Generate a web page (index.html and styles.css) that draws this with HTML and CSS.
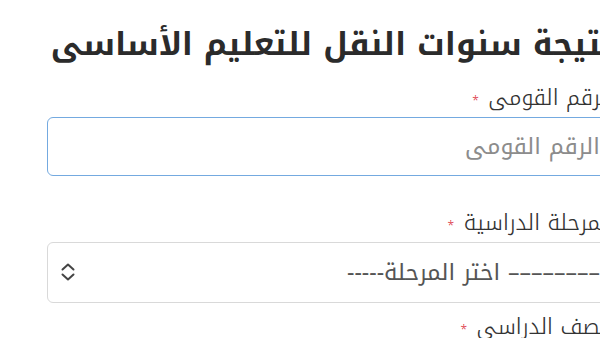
FILE: index.html
```html
<!DOCTYPE html>
<html lang="ar">
<head>
<meta charset="utf-8">
<title>نتيجة سنوات النقل للتعليم الأساسى</title>
<link rel="stylesheet" href="styles.css">
</head>
<body>
<main class="page">
  <form class="form" dir="rtl">
    <h2 class="title">نتيجة سنوات النقل للتعليم الأساسى</h2>

    <div class="field field-first">
      <label class="label" for="nid">الرقم القومى <span class="req">*</span></label>
      <input class="control control-focus" id="nid" type="text" placeholder="الرقم القومى">
    </div>

    <div class="field">
      <label class="label" for="stage">المرحلة الدراسية <span class="req">*</span></label>
      <div class="select-wrap">
        <select class="control control-select" id="stage">
          <option>–––––––– اختر المرحلة-----</option>
        </select>
        <svg class="chevrons" width="16" height="20" viewBox="0 0 16 20" aria-hidden="true">
          <path d="M2.5 7.5 L8 2.5 L13.5 7.5" fill="none" stroke="#444" stroke-width="2" stroke-linecap="round" stroke-linejoin="round"/>
          <path d="M2.5 12.5 L8 17.5 L13.5 12.5" fill="none" stroke="#444" stroke-width="2" stroke-linecap="round" stroke-linejoin="round"/>
        </svg>
      </div>
    </div>

    <div class="field">
      <label class="label" for="grade">الصف الدراسى <span class="req">*</span></label>
      <div class="select-wrap">
        <select class="control control-select" id="grade">
          <option>–––––––– اختر الصف-----</option>
        </select>
      </div>
    </div>
  </form>
</main>
</body>
</html>
```

FILE: styles.css
```css
html, body {
  margin: 0;
  padding: 0;
  background: #ffffff;
  overflow: hidden;
}

body {
  font-family: "Noto Kufi Arabic", "Noto Sans Arabic", "DejaVu Sans", sans-serif;
  color: #333333;
}

.page {
  width: 700px;
  padding-left: 47px;
}

.form {
  width: 566px;
  display: flex;
  flex-direction: column;
}

.title {
  margin: 25px 0 20px 0;
  font-size: 32px;
  line-height: 40px;
  font-weight: 700;
  color: #2b2b2b;
  text-align: right;
  white-space: nowrap;
}

.field {
  display: flex;
  flex-direction: column;
  margin-bottom: 11px;
}

.field-first {
  margin-bottom: 34px;
}

.label {
  font-size: 22px;
  line-height: 26px;
  font-weight: 300;
  color: #333333;
  margin-bottom: 6px;
  white-space: nowrap;
}

.req {
  color: #dc3545;
  font-size: 12px;
  line-height: 1;
  margin-right: 2px;
}

.control {
  box-sizing: border-box;
  width: 100%;
  font-family: inherit;
  font-size: 23px;
  background: #ffffff;
  border-radius: 6px;
  padding: 0 12px;
  outline: none;
}

.control-focus {
  height: 59px;
  border: 1px solid #74aae0;
}

.control::placeholder {
  color: #8c8c8c;
}

.select-wrap {
  position: relative;
}

.control-select {
  height: 61px;
  border: 1px solid #d9d9d9;
  color: #555555;
  appearance: none;
  -webkit-appearance: none;
}

.chevrons {
  position: absolute;
  left: 13px;
  top: 20px;
  pointer-events: none;
}
```
